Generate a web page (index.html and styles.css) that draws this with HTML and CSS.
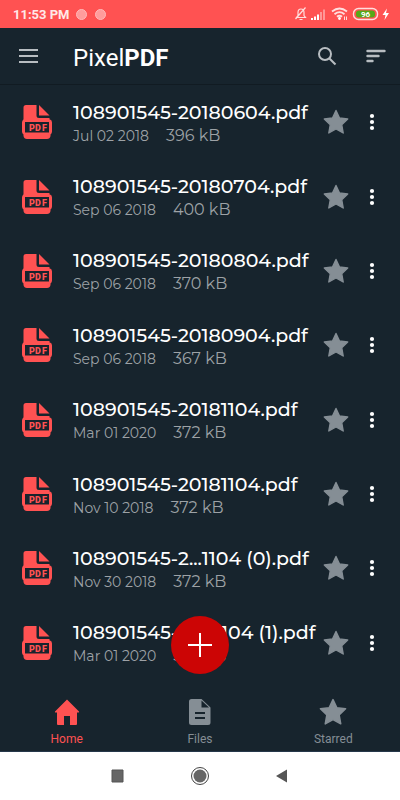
FILE: index.html
```html
<!DOCTYPE html>
<html lang="en">
<head>
<meta charset="utf-8">
<meta name="viewport" content="width=device-width, initial-scale=1">
<title>PixelPDF</title>
<link rel="stylesheet" href="styles.css">
</head>
<body>
<svg class="sprite" aria-hidden="true">
  <symbol id="star" viewBox="0 0 26 26"><path d="M13 1.500 L16.500 9 L24.700 10 L18.700 15.700 L20.200 24 L13 20 L5.800 24 L7.300 15.700 L1.300 10 L9.500 9 Z" fill="currentColor" stroke="currentColor" stroke-width="1.400" stroke-linejoin="round"/></symbol>
  <symbol id="dots" viewBox="0 0 6 18"><circle cx="3" cy="3" r="2.100"/><circle cx="3" cy="9" r="2.100"/><circle cx="3" cy="15" r="2.100"/></symbol>
</svg>
<div class="app">
  <div class="status">
    <span class="clock">11:53 PM</span>
    <i class="notice"></i><i class="notice"></i>
    <svg class="status-icons" width="98" height="16" viewBox="0 0 98 16" fill="none" stroke="#ffdede">
      <path d="M2.500 11.500 H11.500 L10 9.500 V6.500 Q10 3 7 3 Q4 3 4 6.500 V9.500Z M5.500 13.500 H8.500 M1.500 13 L11.500 1.500" stroke-width="1.200"/>
      <g stroke="none" fill="#fff"><path d="M17 12h2v2h-2zM20 10.500h2v3.500h-2zM23 8.500h2v5.500h-2z"/><path opacity=".4" d="M26 6h2v8h-2zM29 3.500h2v10.500h-2z"/></g>
      <path d="M38 5.500 Q45.500 -.5 53 5.500 M40.500 8.200 Q45.500 4 50.500 8.200 M43 10.800 Q45.500 8.600 48 10.800" stroke-width="1.800"/>
      <circle cx="45.500" cy="12.500" r="1.400" fill="#fff" stroke="none"/><path d="M50.500 10.500v3.500M52.500 10.500v3.500" stroke-width="1"/>
      <rect x="59.500" y="2.500" width="24" height="11" rx="5" stroke-width="1.400"/>
      <rect x="62" y="4.500" width="19" height="7" rx="3" fill="#57a817" stroke="none"/>
      <text class="battery" x="71.500" y="11" text-anchor="middle">96</text>
      <path d="M93 2.500 L88.500 9 H91.500 L90.500 14 L95 7 H92Z" fill="#fff" stroke="none"/>
    </svg>
  </div>
  <header class="bar">
    <button class="icon-btn" aria-label="Menu"><svg width="20" height="16" viewBox="0 0 20 16"><path d="M0 2h19M0 8h19M0 14h19" stroke="currentColor" stroke-width="2"/></svg></button>
    <h1>Pixel<b>PDF</b></h1>
    <button class="icon-btn" aria-label="Search"><svg width="20" height="20" viewBox="0 0 20 20" fill="none" stroke="currentColor" stroke-width="2"><circle cx="8" cy="8" r="6"/><path d="M12.200 12.200 L18.500 18.500"/></svg></button>
    <button class="icon-btn sort" aria-label="Sort"><svg width="20" height="16" viewBox="0 0 20 16"><path d="M1.500 3h17M1.500 8h11M1.500 13h5" stroke="currentColor" stroke-width="2.400" stroke-linecap="round"/></svg></button>
  </header>
  <ul class="list" id="list"></ul>
  <nav class="tabs">
    <button class="fab" aria-label="Add file"><svg width="26" height="26" viewBox="0 0 26 26"><path d="M13 1v24M1 13h24" stroke="#fff" stroke-width="2"/></svg></button>
    <a class="active" href="#home"><svg width="26" height="28" viewBox="0 0 26 28" fill="currentColor"><path d="M13 1.500 L25 13.500 Q25.500 14.500 24.500 14.500 H23 V26 Q23 27 22 27 H16 V18 H10 V27 H4 Q3 27 3 26 V14.500 H1.500 Q.5 14.500 1 13.500Z"/></svg>Home</a>
    <a href="#files"><svg width="26" height="28" viewBox="0 0 26 28"><path fill-rule="evenodd" fill="currentColor" d="M4.500 1 H14.500 L23.500 9.500 V24.500 Q23.500 27 21 27 H4.500 Q2 27 2 24.500 V3.500 Q2 1 4.500 1Z M14.500 2.500 V9.500 H22Z M8 14 V16 H18 V14Z M8 19 V21 H18 V19Z"/></svg>Files</a>
    <a href="#starred"><svg width="28" height="28"><use href="#star"/></svg>Starred</a>
  </nav>
  <div class="system">
    <button aria-label="Recent apps"><svg width="20" height="20" viewBox="0 0 20 20"><path d="M4 4h11v12H4z" fill="#666" stroke="#555"/></svg></button>
    <button aria-label="System home"><svg width="20" height="20" viewBox="0 0 20 20"><circle cx="10" cy="10" r="8.500" fill="none" stroke="#444"/><circle cx="10" cy="10" r="6.500" fill="#666"/></svg></button>
    <button aria-label="Back"><svg width="20" height="20" viewBox="0 0 20 20"><path d="M15 3.500v13L4 10z" fill="#555"/></svg></button>
  </div>
</div>
<script src="app.js"></script>
</body>
</html>
```
FILE: app.js
```js
const files = [
  ["108901545-20180604.pdf", "Jul 02 2018", "396 kB"],
  ["108901545-20180704.pdf", "Sep 06 2018", "400 kB"],
  ["108901545-20180804.pdf", "Sep 06 2018", "370 kB"],
  ["108901545-20180904.pdf", "Sep 06 2018", "367 kB"],
  ["108901545-20181104.pdf", "Mar 01 2020", "372 kB"],
  ["108901545-20181104.pdf", "Nov 10 2018", "372 kB"],
  ["108901545-2...1104 (0).pdf", "Nov 30 2018", "372 kB"],
  ["108901545-20...1104 (1).pdf", "Mar 01 2020", "372 kB"]
];
const pdfIcon = `
  <svg class="pdf" width="32" height="36" viewBox="0 0 32 36" aria-hidden="true">
    <path d="M5 1 H15.500 V11.500 Q15.500 14 18 14 H28.500 V17 H2.500 V3.500 Q2.500 1 5 1Z"/>
    <path d="M18 1 L28.500 11.500 H18Z"/>
    <path fill-rule="evenodd" d="M2.500 15.500 H29 Q31 16 31 18.500 V27.500 Q31 29.500 29.500 30.500 V32 Q29 35 26 35 H6 Q3 35 2.500 32 V30.500 Q1 29.500 1 27.500 V18.500 Q1 16.500 2.500 15.500Z"/>
    <path class="plate" d="M4 18h24v10.500H4z"/>
    <text x="8" y="26.500">P</text><text x="14" y="26.500">D</text><text x="21" y="26.500">F</text>
  </svg>`;
document.getElementById("list").innerHTML = files.map(([name, date, size]) => `
  <li>
    ${pdfIcon}
    <div class="info"><div class="name">${name}</div><div class="meta"><span>${date}</span><span class="size">${size}</span></div></div>
    <button class="star" aria-label="Star ${name}"><svg width="26" height="26"><use href="#star"/></svg></button>
    <button class="more" aria-label="More options for ${name}"><svg width="6" height="18"><use href="#dots"/></svg></button>
  </li>`).join("");
```
FILE: styles.css
```css
* { box-sizing: border-box; }
body { margin: 0; background: #17242d; font-family: Roboto, sans-serif; }
button { padding: 0; border: 0; background: none; color: inherit; font: inherit; display: flex; align-items: center; justify-content: center; }
svg { display: block; }
.sprite { position: absolute; width: 0; height: 0; }
.app { min-height: 100vh; display: flex; flex-direction: column; }
.status { height: 28px; background: #ff5252; display: flex; align-items: center; padding: 0 8px 0 13px; color: #ffe8e8; }
.clock { font-size: 13px; font-weight: 700; margin-right: 6px; }
.notice { width: 11px; height: 11px; border-radius: 50%; background: #ff9c9c; border: 1px solid #ffb9b9; margin-right: 8px; }
.status-icons { margin-left: auto; }
.battery { font: 700 8px Roboto, sans-serif; fill: #fff; stroke: none; }
.bar { height: 57px; display: flex; align-items: center; padding: 0 9px 0 14px; color: #b8bdc1; border-bottom: 1px solid #111b22; }
.icon-btn { width: 30px; height: 40px; }
.sort { margin-left: 19px; }
.bar h1 { flex: 1; margin: 0 0 0 29px; color: #fff; font-size: 24px; line-height: 32px; font-weight: 400; padding-top: 3px; }
.list { flex: 1; margin: 0; padding: 0; list-style: none; display: grid; grid-auto-rows: 1fr; }
.list li { display: flex; align-items: center; padding: 0 18px 0 21px; color: #fff; }
.pdf { fill: #ff5252; flex: none; }
.pdf .plate { fill: #17242d; }
.pdf text { font: 900 9px Roboto, sans-serif; }
.info { flex: 1; min-width: 0; margin-left: 20px; padding-top: 3px; white-space: nowrap; font-family: Montserrat, Inter, sans-serif; }
.name { font-size: 19px; line-height: 24px; font-weight: 500; }
.meta { display: flex; align-items: baseline; gap: 17px; color: #9da2a6; font-size: 14px; line-height: 22px; }
.size { font-size: 16px; }
.star { flex: none; width: 26px; height: 40px; color: #858e95; }
.more { flex: none; width: 20px; height: 40px; margin-left: 13px; fill: #fff; }
.tabs { position: relative; height: 71px; display: grid; grid-template-columns: repeat(3, 1fr); padding-top: 18px; }
.tabs a { display: flex; flex-direction: column; align-items: center; gap: 5px; color: #858e95; font-size: 12px; line-height: 16px; text-decoration: none; }
.tabs .active { color: #ff5252; }
.fab { position: absolute; left: calc(50% - 29px); top: -64px; width: 58px; height: 58px; border-radius: 50%; background: #cc0505; }
.system { height: 49px; background: #fff; border-top: 1px solid #26384a; display: flex; align-items: center; justify-content: center; gap: 62px; }
```
